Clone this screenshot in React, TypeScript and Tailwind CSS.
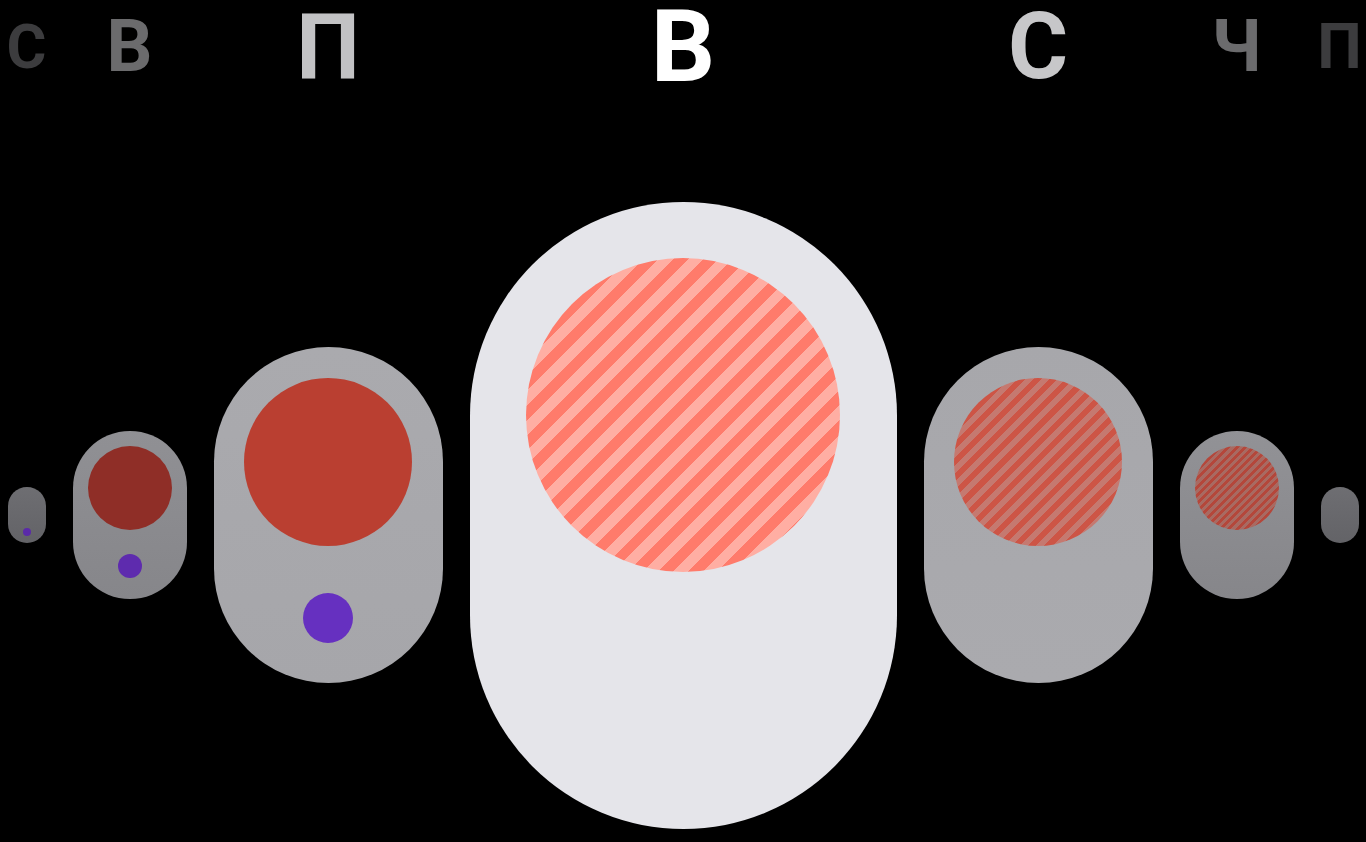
type Day = {
  letter: string;
  letterClass: string;
  pillClass: string;
  circleClass?: string;
  dotClass?: string;
};

// days laid out around the selected one, shrinking towards the edges
const days: Day[] = [
  {
    letter: "С",
    letterClass: "text-[61px] text-[#3c3c3e]",
    pillClass: "w-[38px] h-[56px] bg-gradient-to-b from-[#6e6e72] to-[#636367]",
    dotClass: "mt-[41px] w-[8px] h-[8px] bg-[#5a2aa8]",
  },
  {
    letter: "В",
    letterClass: "text-[72px] text-[#6b6b6d]",
    pillClass: "w-[114px] h-[168px] bg-gradient-to-b from-[#909094] to-[#86868a]",
    circleClass: "mt-[15px] w-[84px] h-[84px] bg-[#8f2e27]",
    dotClass: "mt-[24px] w-[24px] h-[24px] bg-[#5e2bae]",
  },
  {
    letter: "П",
    letterClass: "text-[90px] text-[#c2c2c4]",
    pillClass: "w-[229px] h-[336px] bg-gradient-to-b from-[#aaaaae] to-[#a6a6aa]",
    circleClass: "mt-[31px] w-[168px] h-[168px] bg-[#ba3f31]",
    dotClass: "mt-[47px] w-[50px] h-[50px] bg-[#6630c0]",
  },
  {
    letter: "В",
    letterClass: "text-[101px] text-white",
    pillClass: "w-[427px] h-[627px] bg-[#e5e5ea]",
    circleClass:
      "mt-[56px] w-[314px] h-[314px] bg-[repeating-linear-gradient(135deg,#ff7b6b_0px,#ff7b6b_10.5px,#ffaea3_10.5px,#ffaea3_21px)]",
  },
  {
    letter: "С",
    letterClass: "text-[92px] text-[#c7c7c9]",
    pillClass: "w-[229px] h-[336px] bg-gradient-to-b from-[#a7a7ab] to-[#aaaaae]",
    circleClass:
      "mt-[31px] w-[168px] h-[168px] bg-[repeating-linear-gradient(135deg,#cd5546_0px,#cd5546_5.7px,#c57970_5.7px,#c57970_11.4px)]",
  },
  {
    letter: "Ч",
    letterClass: "text-[72px] text-[#6b6b6d]",
    pillClass: "w-[114px] h-[168px] bg-gradient-to-b from-[#929296] to-[#86868a]",
    circleClass:
      "mt-[15px] w-[84px] h-[84px] bg-[repeating-linear-gradient(135deg,#b4473b_0px,#b4473b_2.9px,#a86a62_2.9px,#a86a62_5.8px)]",
  },
  {
    letter: "П",
    letterClass: "text-[63px] text-[#3c3c3e]",
    pillClass: "w-[38px] h-[56px] bg-gradient-to-b from-[#6e6e72] to-[#636367]",
  },
];

function DayColumn({ day }: { day: Day }) {
  return (
    <div className="flex flex-col items-center">
      {/* letter shouldn't widen the column, so it sits in a zero-width box */}
      <div className="h-[94px] w-0 flex items-center justify-center">
        <span className={`font-bold leading-[0.9] ${day.letterClass}`}>{day.letter}</span>
      </div>
      <div className="flex-1 flex items-center pt-[94px]">
        <div className={`rounded-full flex flex-col items-center ${day.pillClass}`}>
          {day.circleClass && <div className={`rounded-full ${day.circleClass}`} />}
          {day.dotClass && <div className={`rounded-full ${day.dotClass}`} />}
        </div>
      </div>
    </div>
  );
}

export default function App() {
  return (
    <div
      className="h-screen w-full bg-black overflow-hidden flex justify-center gap-[27px]"
      style={{ fontFamily: "Roboto, 'Liberation Sans', sans-serif" }}
    >
      {days.map((day, i) => (
        <DayColumn key={i} day={day} />
      ))}
    </div>
  );
}
